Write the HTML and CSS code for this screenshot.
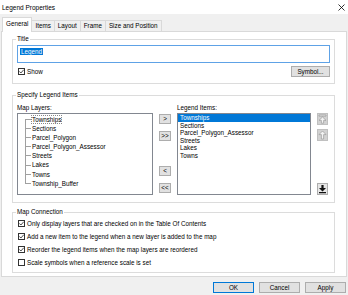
FILE: index.html
```html
<!DOCTYPE html>
<html lang="en">
<head>
    <meta charset="UTF-8">
    <title>Legend Properties</title>
    <link rel="stylesheet" href="styles.css">
</head>
<body>
    <div class="dialog">
        <div class="titlebar">
            <span class="caption">Legend Properties</span>
            <svg class="close" width="7" height="7" viewBox="0 0 7 7"><path d="M0.5 0.5 L6.5 6.5 M6.5 0.5 L0.5 6.5" stroke="#000" stroke-width="0.8"/></svg>
        </div>
        <div class="tabs">
            <div class="tab active">General</div>
            <div class="tab">Items</div>
            <div class="tab">Layout</div>
            <div class="tab">Frame</div>
            <div class="tab">Size and Position</div>
        </div>
        <div class="panel">
            <fieldset class="group group-title">
                <legend>Title</legend>
                <div class="textbox"><span class="sel">Legend</span></div>
                <div class="show-row">
                    <label class="check">
                        <span class="box"><svg width="7" height="7" viewBox="0 0 7 7"><path d="M1.3 3.4 L2.9 5 L5.8 1.7" fill="none" stroke="#222" stroke-width="0.8"/></svg></span>
                        Show
                    </label>
                    <button class="btn btn-symbol">Symbol...</button>
                </div>
            </fieldset>

            <fieldset class="group group-items">
                <legend>Specify Legend Items</legend>
                <div class="lists">
                    <div class="list-label">Map Layers:</div>
                    <div class="list-label right-label">Legend Items:</div>
                    <ul class="listbox tree">
                        <li class="focus"><span class="conn"><i></i><i></i></span><span class="txt">Townships</span></li>
                        <li><span class="conn"><i></i><i></i></span><span class="txt">Sections</span></li>
                        <li><span class="conn"><i></i><i></i></span><span class="txt">Parcel_Polygon</span></li>
                        <li><span class="conn"><i></i><i></i></span><span class="txt">Parcel_Polygon_Assessor</span></li>
                        <li><span class="conn"><i></i><i></i></span><span class="txt">Streets</span></li>
                        <li><span class="conn"><i></i><i></i></span><span class="txt">Lakes</span></li>
                        <li><span class="conn"><i></i><i></i></span><span class="txt">Towns</span></li>
                        <li class="last"><span class="conn"><i></i><i></i></span><span class="txt">Township_Buffer</span></li>
                    </ul>
                    <div class="move-btns">
                        <button class="btn small">&gt;</button>
                        <button class="btn small">&gt;&gt;</button>
                        <span class="spacer"></span>
                        <button class="btn small">&lt;</button>
                        <button class="btn small">&lt;&lt;</button>
                    </div>
                    <ul class="listbox legend-list">
                        <li class="selected">Townships</li>
                        <li>Sections</li>
                        <li>Parcel_Polygon_Assessor</li>
                        <li>Streets</li>
                        <li>Lakes</li>
                        <li>Towns</li>
                    </ul>
                    <div class="order-btns">
                        <button class="icon-btn disabled">
                            <svg width="9" height="10" viewBox="0 0 9 10"><path d="M1 1 H8 V2.2 H1 Z M4.5 3 L8 6.4 H5.6 V9.2 H3.4 V6.4 H1 Z" fill="#f4f4f4" stroke="#8f8f8f" stroke-width="0.6"/></svg>
                        </button>
                        <button class="icon-btn disabled">
                            <svg width="9" height="10" viewBox="0 0 9 10"><path d="M4.5 1 L8 4.6 H5.6 V9 H3.4 V4.6 H1 Z" fill="#f4f4f4" stroke="#8f8f8f" stroke-width="0.6"/></svg>
                        </button>
                        <span class="spacer"></span>
                        <button class="icon-btn">
                            <svg width="9" height="10" viewBox="0 0 9 10"><path d="M3.4 1 H5.6 V4 H8 L4.5 7.4 L1 4 H3.4 Z M1 8 H8 V9.3 H1 Z" fill="#111"/></svg>
                        </button>
                    </div>
                </div>
            </fieldset>

            <fieldset class="group group-conn">
                <legend>Map Connection</legend>
                <label class="check row">
                    <span class="box"><svg width="7" height="7" viewBox="0 0 7 7"><path d="M1.3 3.4 L2.9 5 L5.8 1.7" fill="none" stroke="#222" stroke-width="0.8"/></svg></span>
                    Only display layers that are checked on in the Table Of Contents
                </label>
                <label class="check row">
                    <span class="box"><svg width="7" height="7" viewBox="0 0 7 7"><path d="M1.3 3.4 L2.9 5 L5.8 1.7" fill="none" stroke="#222" stroke-width="0.8"/></svg></span>
                    Add a new item to the legend when a new layer is added to the map
                </label>
                <label class="check row">
                    <span class="box"><svg width="7" height="7" viewBox="0 0 7 7"><path d="M1.3 3.4 L2.9 5 L5.8 1.7" fill="none" stroke="#222" stroke-width="0.8"/></svg></span>
                    Reorder the legend items when the map layers are reordered
                </label>
                <label class="check row">
                    <span class="box"></span>
                    Scale symbols when a reference scale is set
                </label>
            </fieldset>
        </div>
        <div class="footer">
            <button class="btn btn-foot default">OK</button>
            <button class="btn btn-foot">Cancel</button>
            <button class="btn btn-foot">Apply</button>
        </div>
    </div>
</body>
</html>
```

FILE: styles.css
```css
body{
    margin: 0;
    padding: 0;
    background-color: #f0f0f0;
    font-family: "Liberation Sans", Arial, sans-serif;
    font-size: 6.3px;
    color: #000;
}
.dialog{
    width: 348px;
    height: 295px;
    overflow: hidden;
}
.titlebar{
    height: 14px;
    background-color: #fff;
    display: flex;
    align-items: center;
    justify-content: space-between;
    padding: 0 3px 0 2px;
}
.caption{font-size: 6.5px;}

/* tab strip */
.tabs{
    height: 17px;
    display: flex;
    align-items: flex-end;
    padding-left: 2px;
}
.tab{
    height: 10px;
    line-height: 10px;
    padding: 0 3px;
    border: 1px solid #d9d9d9;
    border-bottom: none;
    border-left: none;
    background-color: #f0f0f0;
}
.tab.active{
    height: 14px;
    line-height: 12px;
    border-left: 1px solid #d9d9d9;
    background-color: #fff;
    margin-bottom: -1px;
    position: relative;
    z-index: 1;
}
.panel{
    margin: 0 1px;
    background-color: #fff;
    border: 1px solid #d9d9d9;
    padding: 3px 11px 3px 10px;
    height: 238px;
}

/* group boxes */
.group{
    margin: 0;
    border: 1px solid #dcdcdc;
    padding: 2px 4px 6px 4px;
}
.group legend{
    padding: 0 1px;
    margin-left: -1px;
    line-height: 8px;
}
.group-items{margin-top: 7px; padding-top: 5px; padding-bottom: 7px;}
.group-conn{margin-top: 5px; padding-top: 1px; padding-bottom: 3px;}

.textbox{
    box-sizing: border-box;
    height: 18px;
    border: 1px solid #5ea2e6;
    padding: 2px 2px;
    line-height: 7px;
}
.sel{
    background-color: #0078d7;
    color: #fff;
    padding: 0 1px;
}
.show-row{
    margin-top: 3px;
    display: flex;
    justify-content: space-between;
    align-items: center;
}
.check{
    display: flex;
    align-items: center;
    gap: 2px;
    padding-left: 1px;
}
.box{
    width: 7px;
    height: 7px;
    box-sizing: border-box;
    border: 1px solid #333;
    background-color: #fff;
    display: flex;
}
.box svg{margin: -1px;}
.check.row{height: 13px;}

/* buttons */
.btn{
    font-family: inherit;
    font-size: 6.3px;
    background-color: #e1e1e1;
    border: 1px solid #adadad;
    border-radius: 0;
    padding: 0;
    margin: 0;
    color: #000;
}
.btn-symbol{width: 39px; height: 11px;}
.btn.small{width: 12px; height: 10px; line-height: 8px;}

/* lists */
.lists{
    display: grid;
    grid-template-columns: 136px 12px 134px 11px;
    grid-template-rows: 9px 82px;
    column-gap: 6px;
}
.list-label{line-height: 8px;}
.right-label{grid-column: 3;}
.listbox{
    list-style: none;
    margin: 0;
    padding: 0;
    border: 1px solid #828790;
    overflow: hidden;
}
.tree{
    grid-column: 1;
    grid-row: 2;
    padding: 1px 0 0 7px;
}
.tree li{
    display: flex;
    height: 9.1px;
}
.conn{
    width: 6px;
    display: flex;
    flex-direction: column;
}
.conn i{
    flex: 1;
    border-left: 1px solid #a0a0a0;
}
.conn i:first-child{border-bottom: 1px solid #a0a0a0;}
.tree li.last .conn i:last-child{border-left: none;}
.tree li:first-child .conn i:first-child{border-left: none;}
.txt{
    line-height: 9px;
    padding: 0 1px;
}
.tree li.focus .txt{outline: 1px dotted #888; outline-offset: -1px;}

.move-btns, .order-btns{
    grid-row: 2;
    display: flex;
    flex-direction: column;
    gap: 7px;
}
.move-btns{grid-column: 2; padding-top: 1px; padding-bottom: 2px;}
.spacer{flex: 1;}

.legend-list{
    grid-column: 3;
    grid-row: 2;
    padding: 0;
}
.legend-list li{
    height: 7.6px;
    line-height: 7.6px;
    padding-left: 2px;
}
.legend-list li.selected{
    background-color: #0078d7;
    color: #fff;
}
.order-btns{grid-column: 4; gap: 4px;}
.icon-btn{
    width: 11px;
    height: 12px;
    padding: 0;
    margin: 0;
    border: 1px solid #adadad;
    background-color: #e6e6e6;
    display: flex;
    align-items: center;
    justify-content: center;
}
.icon-btn.disabled{
    background-color: #d2d2d2;
    border-color: #c0c0c0;
}

/* footer */
.footer{
    display: flex;
    justify-content: flex-end;
    gap: 5px;
    padding: 5px 2px 0 0;
}
.btn-foot{width: 41px; height: 11px;}
.btn.default{border-color: #0078d7;}
```
